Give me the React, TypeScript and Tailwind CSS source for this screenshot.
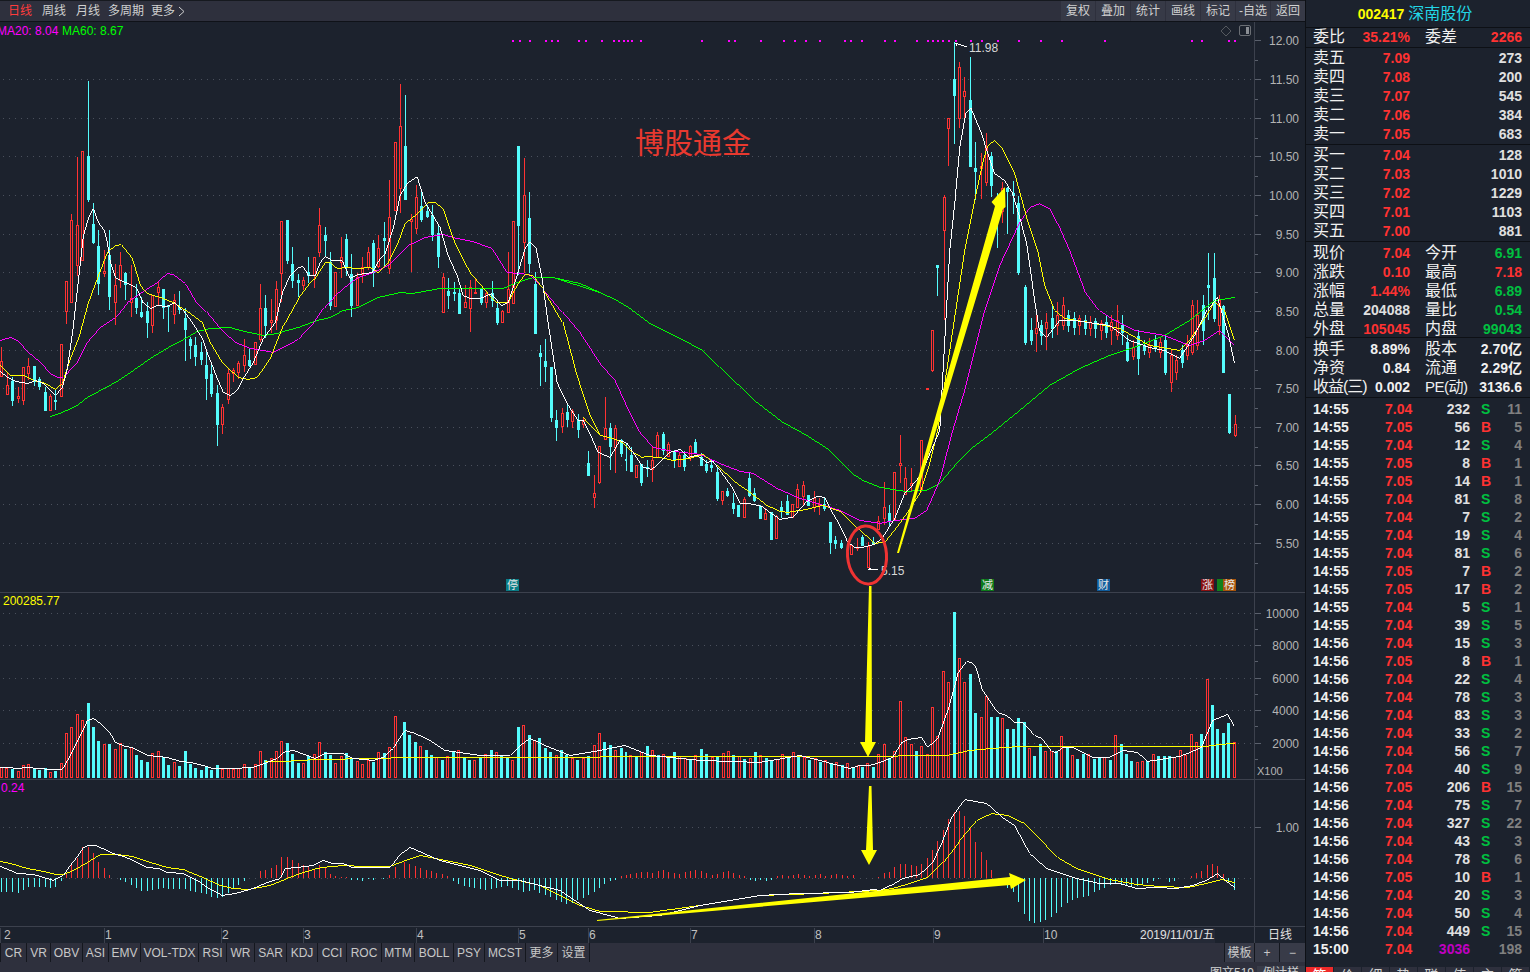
import React from "react";

// candle rows: [x, colour, high, bodyTop, bodyBottom, low], read off zoomed crops
type Row = [number, string, number, number, number, number];
type Pt = [number, number];

const seg = (ox: number, oy: number, rows: Row[], k = 3): Row[] =>
  rows.map(([x, c, h, t, b, l]) => [ox + x / k, c, oy + h / k, oy + t / k, oy + b / k, oy + l / k]);
const pts = (ox: number, oy: number, list: Pt[], k = 3): Pt[] => list.map(([x, y]) => [ox + x / k, oy + y / k]);
// half-pixel offset keeps the 1px lines on one pixel row
const toLine = (list: Pt[]) => list.map(([x, y]) => `${Math.round(x) + 0.5},${Math.round(y) + 0.5}`).join(" ");

const candles: Row[] = [
  ...seg(0, 75, [
    [3,"r",815,857,902,905],[22,"r",890,930,956,960],[37,"c",905,918,974,992],[55,"r",935,962,968,985],[70,"r",875,877,974,990],
    [85,"r",848,873,895,915],[103,"c",873,873,918,932],[118,"c",905,912,933,945],[136,"c",935,951,1005,1008],[151,"r",958,963,1006,1008],
    [166,"c",945,975,977,1005],[184,"r",808,808,964,966],[199,"r",619,619,707,746],[214,"r",418,436,680,682],[232,"r",247,451,569,603],
    [247,"r",229,229,556,558],[265,"c",18,243,372,381],[280,"c",385,447,501,507],[295,"c",465,513,623,660],[313,"r",525,589,594,607],
    [328,"c",465,540,662,705],[346,"r",568,630,680,750],[361,"r",532,571,615,640],[376,"c",590,594,627,675],[394,"r",570,670,680,725],
    [409,"c",628,668,695,717],[424,"c",665,711,723,728],[442,"c",680,708,740,790],[457,"r",660,660,749,773],[475,"r",618,637,651,690],
    [490,"c",642,642,697,732],[505,"c",690,691,693,770],[523,"r",657,675,716,746],[538,"c",648,695,702,718],[556,"c",700,730,762,857],
    [571,"c",785,792,809,852],[586,"c",785,809,842,873],[604,"c",800,831,851,870],[619,"c",828,870,908,974],[634,"c",870,897,954,965],
    [652,"c",930,954,1047,1112],[667,"r",988,997,1046,1076],[685,"r",880,895,973,988],[700,"r",878,885,893,920],[715,"r",858,865,892,912],
    [733,"r",793,841,869,890],[748,"c",820,855,870,875],[766,"r",800,801,868,870],[781,"r",628,700,791,800],[796,"c",660,700,749,790],
    [814,"r",672,736,740,775],[829,"r",618,643,736,765],[844,"r",439,439,593,680],[862,"c",436,436,555,566],[877,"c",517,568,614,638],
    [895,"c",598,616,620,667],
  ]),
  ...seg(300, 75, [
    [10,"r",605,615,629,645],[25,"c",547,592,600,625],[43,"r",547,547,600,640],[58,"r",400,451,530,545],[76,"c",455,481,494,545],
    [91,"c",530,561,690,705],[106,"r",590,592,692,694],[124,"r",485,545,560,608],[139,"c",478,492,575,603],[154,"c",538,598,690,725],
    [172,"r",595,605,689,691],[187,"r",547,575,596,623],[205,"r",515,532,575,585],[220,"c",495,505,590,635],[235,"r",480,520,572,580],
    [253,"c",442,490,494,575],[268,"r",315,427,578,596],[286,"r",202,202,406,408],[301,"r",28,154,338,413],[316,"c",60,213,371,373],
    [334,"r",418,432,438,590],[349,"r",330,367,458,478],[364,"c",345,392,431,440],[382,"c",390,408,423,430],[397,"c",390,420,477,497],
    [415,"c",450,475,543,578],[430,"r",595,607,712,714],[445,"c",610,648,660,702],[463,"c",622,652,654,678],[478,"c",640,653,713,718],
    [496,"r",630,682,697,700],[511,"r",615,635,700,770],[526,"r",610,650,652,655],[544,"c",640,642,680,690],[559,"r",650,655,680,700],
    [577,"c",618,655,675,695],[592,"c",675,700,740,750],[607,"r",705,709,742,745],[625,"r",530,642,710,712],[640,"r",437,439,683,685],
    [655,"c",213,213,449,600],[673,"r",250,361,502,595],[688,"c",352,430,563,595],[706,"c",592,627,773,775],[721,"c",810,835,843,932],
    [736,"c",793,858,873,920],[754,"c",875,877,1025,1040],[769,"c",1005,1035,1055,1097],[787,"r",1000,1015,1052,1073],[802,"c",985,1010,1032,1055],
    [817,"r",1003,1008,1037,1060],[835,"c",1018,1036,1063,1088],[850,"r",1025,1035,1048,1058],
  ]),
  ...seg(540, 260, [
    [145,"c",573,609,645,645],[163,"r",645,699,710,743],[178,"r",558,558,666,671],[196,"r",412,505,537,540],[211,"c",490,504,558,630],
    [226,"r",495,505,560,640],[244,"c",537,540,578,590],[259,"c",548,597,599,632],[277,"c",560,585,634,637],[292,"r",615,615,650,652],
    [307,"c",612,613,666,678],[325,"c",600,622,624,650],[340,"r",560,600,628,665],[355,"r",515,525,590,592],[373,"c",515,522,570,586],
    [388,"r",545,553,588,590],[406,"c",570,576,600,623],[421,"r",575,586,617,620],[436,"c",572,585,617,632],[454,"r",555,558,588,602],
    [469,"c",537,547,577,580],[487,"c",580,592,615,618],[502,"c",600,612,630,638],[517,"c",600,615,622,635],[535,"c",625,637,713,722],
    [550,"r",693,694,719,735],[565,"c",685,694,705,712],[583,"c",700,730,744,762],[598,"c",735,736,767,768],[616,"r",712,716,771,773],
    [631,"c",635,655,705,712],[646,"c",685,700,720,725],[664,"c",735,737,773,778],[679,"r",745,760,776,778],[697,"c",755,757,838,840],
    [712,"r",765,767,835,837],[727,"c",722,742,750,775],[745,"c",705,722,762,765],[760,"r",732,732,771,773],[775,"r",673,687,740,742],
    [793,"r",663,676,707,735],[808,"c",705,706,735,737],[826,"r",693,715,742,755],[841,"r",715,732,735,765],[856,"c",710,732,745,752],
    [874,"c",786,786,846,882],[889,"c",828,840,850,866],
  ]),
  ...seg(780, 430, [
    [187,"c",330,340,352,358],[217,"r",345,345,372,374],[235,"r",325,350,355,362],[250,"c",315,320,345,348],[266,"r",335,348,411,413],
    [283,"c",322,335,342,345],[298,"r",258,274,296,300],[316,"r",155,232,265,285],[331,"c",225,250,270,290],[346,"r",127,127,270,272],
    [364,"r",15,100,105,160],[379,"r",110,145,193,195],[397,"r",115,160,165,185],[427,"r",30,30,180,185],
  ]),
  ...seg(0, 0, [
    [928,"r",388,388,389,390],[933,"r",330,330,370,372],[938,"c",265,265,267,296],[945,"r",195,197,230,320],
  ], 1),
  ...seg(880, 30, [
    [208,"r",265,265,293,408],[226,"c",35,148,194,342],[241,"r",97,112,265,293],[256,"r",141,184,197,265],[274,"c",82,210,407,408],
    [289,"c",335,414,422,510],[307,"r",370,408,414,507],[322,"r",310,352,455,468],[337,"c",367,378,465,500],[355,"c",490,560,563,655],
    [370,"r",455,475,542,578],[385,"c",470,474,483,612],[403,"c",453,490,495,552],
  ]),
  ...seg(0, 0, [
    [1019,"c",196,203,272,275],[1026,"c",285,287,342,345],[1032,"c",318,330,340,345],[1037,"r",310,328,333,352],[1042,"c",320,325,335,345],
    [1047,"r",313,322,328,350],[1053,"c",305,318,328,338],[1058,"r",302,315,325,335],[1064,"r",297,305,325,330],[1069,"c",310,315,325,332],
    [1075,"c",312,318,327,335],[1080,"r",315,318,325,335],[1086,"c",315,320,328,335],[1091,"r",316,322,328,336],[1096,"c",318,321,328,338],
    [1102,"r",320,323,330,340],[1107,"c",316,322,332,338],[1112,"r",315,322,330,345],[1118,"r",305,320,335,340],[1123,"c",315,325,332,345],
    [1128,"c",335,342,360,362],[1134,"r",340,347,356,360],[1139,"c",330,336,358,375],[1145,"c",340,345,350,355],[1150,"r",338,345,352,358],
    [1156,"c",335,340,348,352],[1161,"r",338,342,352,358],[1166,"c",335,340,372,375],[1172,"r",350,355,382,392],[1177,"r",355,360,372,380],
    [1183,"c",345,350,362,368],[1188,"r",335,345,355,360],[1193,"r",300,305,352,355],[1198,"r",300,315,345,350],[1204,"c",295,305,330,345],
    [1209,"c",253,285,287,320],[1215,"c",253,278,318,322],[1220,"r",295,300,325,335],[1224,"c",305,306,372,373],[1230,"c",394,394,432,434],
    [1236,"r",415,424,435,437],
  ], 1),
];

const ma5: Pt[] = [
  ...pts(0, 75, [[0,888],[20,905],[40,915],[60,920],[85,925],[105,915],[130,925],[165,960],[185,935],[200,880],[215,770],[232,640],[250,480],[265,430],[280,400],[295,440],[312,465],[320,500],[330,560],[345,605],[360,615],[385,625],[410,640],[430,680],[450,700],[470,690],[500,692],[525,680],[550,705],[575,740],[605,790],[625,840],[650,910],[670,950],[690,960],[710,945],[730,910],[760,860],[790,790],[825,740],[845,650],[870,600],[895,575]]),
  ...pts(300, 75, [[10,572],[25,600],[45,600],[60,560],[76,543],[95,555],[125,555],[150,610],[175,597],[215,590],[240,550],[255,535],[280,460],[300,360],[320,325],[350,304],[375,380],[420,455],[445,540],[470,600],[490,660],[510,670],[540,668],[575,655],[605,690],[625,680],[650,600],[675,520],[690,497],[708,520],[725,610],[745,740],[770,920],[800,985],[835,1035],[850,1035],[875,1090]]),
  ...pts(540, 260, [[175,575],[210,592],[240,540],[260,550],[280,575],[310,622],[335,628],[365,600],[390,575],[420,568],[445,590],[470,585],[500,605],[520,603],[540,630],[580,685],[600,728],[625,730],[665,738],[690,755],[720,778],[760,770],[800,722],[830,708],[855,712],[880,760],[900,795]]),
  ...pts(780, 430, [[205,335],[225,350],[250,352],[285,342],[310,320],[345,265],[375,190],[410,150],[430,120],[480,0]]),
  ...pts(880, 30, [[210,660],[225,520],[240,350],[258,250],[274,232],[305,310],[320,360],[345,430],[375,450],[400,490],[420,560],[440,640]]),
  [1035,300],[1040,330],[1047,337],[1060,320],[1075,320],[1110,325],[1130,340],[1150,347],[1165,350],[1180,358],[1195,335],[1207,310],[1218,296],[1228,330],[1235,363],
];
const ma10: Pt[] = [
  ...pts(0, 75, [[0,870],[30,900],[70,900],[100,915],[130,920],[165,942],[185,925],[210,850],[235,790],[260,690],[290,610],[320,530],[345,510],[362,508],[395,550],[420,630],[440,655],[480,665],[520,680],[570,715],[605,740],[630,800],[665,860],[715,907],[745,913],[770,905],[810,850],[850,750],[895,668]]),
  ...pts(300, 75, [[30,620],[45,610],[75,560],[90,560],[110,578],[140,577],[175,580],[210,575],[235,592],[265,560],[295,500],[315,445],[345,420],[385,380],[405,380],[430,400],[460,490],[480,535],[510,590],[560,650],[590,680],[625,680],[650,630],[675,597],[700,600],[730,640],[790,740],[830,900],[870,1020],[900,1080]]),
  ...pts(540, 260, [[130,470],[180,525],[220,535],[245,545],[270,570],[305,592],[325,587],[375,593],[400,600],[450,595],[490,583],[530,615],[590,670],[630,695],[680,735],[720,752],[745,757],[800,747],[850,735],[900,752]]),
  ...pts(780, 430, [[230,290],[285,340],[315,335],[350,290],[385,245],[420,190],[450,100],[475,0]]),
  ...pts(880, 30, [[255,660],[290,480],[310,395],[325,345],[345,330],[365,350],[405,430],[440,560],[475,660]]),
  [1045,285],[1055,310],[1065,318],[1090,322],[1120,328],[1150,345],[1180,350],[1190,340],[1205,318],[1215,300],[1225,310],[1235,340],
];
const ma20: Pt[] = [
  ...pts(0, 75, [[0,795],[30,787],[50,795],[85,830],[120,860],[150,895],[170,907],[190,905],[230,860],[260,800],[300,755],[345,725],[380,680],[420,655],[470,620],[500,595],[520,597],[555,625],[585,675],[620,710],[660,760],[705,800],[750,820],[790,825],[820,832],[860,810],[895,792]]),
  ...pts(300, 75, [[40,745],[70,700],[100,665],[140,630],[175,605],[220,590],[265,570],[300,535],[325,510],[375,485],[430,477],[470,490],[520,497],[575,520],[620,590],[690,597],[730,640],[790,710],[840,770],[900,865]]),
  ...pts(540, 260, [[225,360],[270,460],[300,515],[340,560],[400,572],[480,583],[540,610],[600,632],[640,640],[710,685],[780,715],[830,730],[900,750]]),
  ...pts(780, 430, [[240,270],[300,280],[350,270],[405,265],[440,240],[480,150],[520,0]]),
  [965,390],[985,310],[1000,265],[1007,250],[1020,222],[1030,207],[1040,203],[1050,208],[1060,227],[1070,250],[1085,290],[1100,310],[1115,320],[1135,330],[1165,335],[1190,345],[1205,340],[1220,330],[1235,345],
];
const ma60: Pt[] = [
  ...pts(0, 75, [[150,1022],[185,1010],[230,990],[260,965],[345,922],[400,885],[450,850],[510,812],[560,785],[590,768],[630,760],[690,757],[720,765],[790,780],[830,775],[860,765],[895,757]]),
  ...pts(300, 75, [[50,735],[90,725],[130,705],[175,697],[235,665],[300,652],[335,655],[420,640],[610,640],[650,620],[700,605],[760,605],[840,625],[900,650]]),
  ...pts(540, 260, [[40,50],[120,68],[180,95],[230,120],[270,145],[330,188],[420,235],[490,270],[540,320],[590,370],[650,425],[730,485],[800,525],[870,570]]),
  ...pts(780, 430, [[190,100],[215,130],[250,150],[300,170],[375,182],[440,180],[480,160],[530,100],[580,50],[640,5]]),
  [1020,410],[1050,385],[1080,368],[1110,355],[1140,345],[1165,335],[1190,320],[1215,300],[1235,297],
];

// volume bars: [x, colour, top]
type Bar = [number, string, number];
const barsLeft: Bar[] = ([
  [3,"r",546],[19,"r",548],[35,"c",552],[53,"r",558],[70,"r",541],[85,"r",538],[103,"c",548],[118,"c",555],[136,"c",550],[151,"r",561],[166,"c",557],[184,"r",535],[199,"r",445],[214,"r",427],[232,"r",388],[247,"r",406],[265,"c",354],[280,"c",426],[295,"c",468],[313,"r",478],[328,"c",477],[346,"r",492],[361,"r",473],[376,"c",492],[394,"r",486],[409,"c",510],[424,"c",525],[442,"c",531],[457,"r",505],[475,"r",499],[490,"c",515],[505,"c",540],[523,"r",532],[538,"c",543],[556,"c",498],[571,"c",537],[586,"c",549],[604,"c",555],[619,"c",545],[634,"c",555],[652,"c",540],[667,"r",552],[685,"r",548],[700,"r",552],[715,"r",548],[733,"r",538],[748,"c",547],[766,"r",538],[781,"r",498],[796,"c",525],[814,"r",520],[829,"r",498],[844,"r",468],[862,"c",475],[877,"c",507],[895,"c",534],[910,"r",535],[925,"c",514],[943,"r",508],[958,"r",472],[976,"c",502],[991,"c",510],[1006,"r",534],[1024,"r",514],[1039,"c",504],[1054,"c",518],[1072,"r",528],[1087,"r",538],[1105,"r",525],[1120,"c",530],[1135,"r",502],[1153,"c",505],[1168,"r",487],[1186,"r",394],
] as Bar[]).map(([x, c, t]) => [x / 3, c, 585 + t / 3]);

// middle stretch: read from the full view only, spaced like the candles. r = up day, c = down day
const midVol = "c722 c735 c742 r746 c750 c755 r757 c760 r756 c752 r750 c757 c760 r760 c757 r754 c750 r752 c756 c758 r760 c727 r725 c735 r740 c738 c748 c752 r755 c750 c755 r758 c760 r758 c756 r745 r733 c742 c745 r750 c748 c752 r755 c756 r752 c746 r750 c755 r754 c757 c752 r756 r758 c759 r755 c749 c754 r757 c757 r753 r751 c755 r756 c759 r758 c752 r755 c758 c760 r759 r754 c757 r752 c756 r757 c760 r758 c762 r760 c764 r762 c765 r763 c767 r765";
const barsMid: Bar[] = midVol.split(" ").map((s, i) => [404 + i * 5.416, s[0], Number(s.slice(1))]);

const barsRight: Bar[] = ([
  [10,"c",530],[25,"r",520],[43,"c",530],[58,"r",492],[76,"r",463],[91,"c",505],[106,"r",484],[124,"r",334],[139,"r",441],[157,"r",463],[172,"c",483],[187,"r",469],[205,"r",492],[220,"r",352],[235,"r",438],[253,"r",244],[268,"r",277],[286,"c",66],[301,"r",205],[316,"r",277],[334,"c",252],[349,"c",369],[367,"r",382],[382,"r",318],[397,"c",381],[415,"c",381],[430,"r",385],[445,"c",417],[463,"c",417],[478,"c",384],[496,"c",396],[511,"r",475],[526,"c",498],[544,"c",462],[559,"r",484],[577,"r",484],[592,"c",484],[607,"r",439],[625,"c",470],[640,"r",496],[655,"c",507],[673,"c",491],[688,"r",493],[706,"c",507],[721,"c",503],[736,"r",502],[754,"c",510],[769,"r",436],[787,"c",462],[802,"c",492],[817,"c",513],[835,"r",517],[850,"r",514],[865,"c",512],[883,"r",493],[898,"c",498],[916,"c",498],[931,"c",498],[946,"r",500],[964,"r",481],[979,"r",495],[997,"r",433],[1012,"r",457],[1027,"c",432],[1045,"r",268],[1060,"c",345],[1075,"c",417],[1093,"c",429],[1108,"c",399],[1126,"r",457],
] as Bar[]).map(([x, c, t]) => [860 + x / 3, c, 590 + t / 3]);

const volBars = [...barsLeft, ...barsMid, ...barsRight];

const volWhite: Pt[] = [
  ...pts(0, 585, [[0,545],[20,547],[50,550],[80,547],[110,548],[150,552],[185,552],[210,510],[240,450],[260,405],[280,400],[300,415],[330,445],[345,470],[375,483],[395,485],[440,510],[500,517],[540,527],[570,532],[610,540],[635,550],[700,550],[760,545],[800,530],[830,520],[850,500],[880,495],[920,510],[945,520],[975,505],[1030,505],[1060,520],[1120,525],[1150,515],[1180,490],[1200,455]]),
  [405,730],[415,733],[430,740],[445,750],[480,755],[510,755],[520,745],[530,738],[545,745],[570,755],[600,750],[625,745],[650,755],[700,760],[760,762],[800,755],[820,760],[850,768],
  ...pts(860, 590, [[0,525],[30,525],[60,515],[100,500],[125,455],[145,448],[185,440],[205,472],[235,445],[265,360],[295,250],[320,213],[335,215],[350,235],[370,300],[415,367],[440,375],[465,397],[490,397],[525,435],[545,445],[575,483],[590,485],[610,470],[640,472],[700,500],[750,500],[790,480],[835,485],[865,512],[920,505],[960,498],[985,490],[1025,470],[1060,390],[1105,373],[1125,407]]),
];
const volYellow: Pt[] = [
  [265,761],[283,761],[317,759],[383,758],[400,757],[860,756],
  ...pts(860, 590, [[260,494],[330,480],[400,475],[480,468],[840,468],[1040,467],[1080,462],[1125,460]]),
];

// MACD histogram: [x, y end of the bar], zero line at y=878
const macdLeft: Pt[] = pts(0, 585, [[3,920],[19,922],[35,922],[53,924],[70,915],[85,905],[103,906],[118,906],[136,907],[151,908],[166,905],[184,888],[199,865],[214,835],[232,818],[247,787],[265,786],[280,805],[295,832],[313,850],[328,870],[361,884],[376,890],[394,900],[409,910],[424,917],[442,918],[457,915],[475,913],[490,910],[505,912],[520,912],[538,912],[556,912],[571,917],[586,922],[604,925],[619,928],[634,935],[652,940],[667,937],[685,925],[700,912],[715,900],[733,888],[766,878],[781,857],[796,855],[814,850],[829,840],[844,817],[862,816],[877,825],[895,833],[910,840],[925,847],[943,851],[958,840],[976,845],[991,867],[1006,873],[1024,875],[1039,877],[1054,884],[1071,886],[1087,887],[1105,882],[1120,884],[1150,881],[1168,870],[1186,845]]);
const macdMidY = [862,864,866,868,870,871,873,874,876,881,884,886,887,888,889,890,889,888,887,886,888,890,892,891,890,893,895,897,900,902,904,903,900,898,895,892,888,884,881,880,876,875,874,873,872,872,873,871,870,872,873,874,872,871,870,871,873,875,874,872,871,873,875,876,880,881,880,881,880,876,875,876,875,874,875,876,875,874,876,875,874,875,876,875];
const macdMid: Pt[] = macdMidY.map((y, i) => [404 + i * 5.416, y]);
const macdRight: Pt[] = pts(860, 590, [[58,860],[76,850],[91,846],[106,832],[124,822],[139,822],[157,826],[172,827],[187,822],[205,803],[220,780],[235,753],[253,720],[268,688],[286,665],[301,663],[316,678],[334,715],[349,755],[367,786],[382,810],[397,840],[445,893],[463,905],[478,935],[496,972],[511,992],[526,1000],[544,997],[559,990],[577,980],[592,968],[607,950],[625,940],[640,930],[655,925],[673,920],[688,917],[706,905],[721,900],[736,895],[754,885],[769,880],[787,883],[802,885],[817,888],[835,887],[850,885],[865,878],[883,872],[898,868],[931,875],[946,874],[997,858],[1012,850],[1027,843],[1045,825],[1060,823],[1075,828],[1093,852],[1108,880],[1126,900]]);
const macdBars = [...macdLeft, ...macdMid, ...macdRight];

const macdWhite: Pt[] = [
  ...pts(0, 585, [[0,843],[30,855],[50,865],[100,868],[130,875],[160,885],[190,870],[215,830],[245,790],[265,780],[285,780],[320,795],[340,805],[370,813],[400,825],[440,847],[475,850],[500,860],[550,865],[590,885],[620,905],[665,930],[705,925],[760,910],[800,890],[840,880],[855,850],[890,845],[940,840],[970,826],[995,835],[1030,835],[1055,846],[1170,845],[1200,808]]),
  [410,847],[440,860],[480,870],[500,880],[520,880],[560,890],[590,910],[620,918],[660,915],[700,905],[760,895],[800,893],[850,892],[875,889],
  ...pts(860, 590, [[60,900],[100,882],[130,865],[180,852],[215,820],[250,750],[275,680],[315,628],[380,640],[430,680],[465,705],[510,790],[560,835],[650,865],[720,878],[780,880],[830,893],[890,890],[950,895],[1000,885],[1040,870],[1075,850],[1100,872],[1125,890]]),
];
const macdYellow: Pt[] = [
  ...pts(0, 585, [[0,827],[30,835],[80,850],[130,857],[165,868],[190,868],[220,855],[260,830],[300,808],[350,808],[395,812],[450,830],[500,845],[550,852],[600,872],[660,900],[700,910],[745,912],[810,900],[860,880],[900,865],[950,850],[990,842],[1040,840],[1080,842],[1170,843],[1200,830]]),
  [420,855],[470,865],[510,878],[540,885],[580,905],[600,911],[650,912],[700,905],[760,895],[820,893],[880,890],
  ...pts(860, 590, [[100,895],[150,880],[205,862],[250,815],[300,750],[350,690],[395,670],[445,675],[495,700],[595,800],[650,835],[750,868],[830,882],[900,887],[985,890],[1040,878],[1085,868],[1125,875]]),
];

const dots = [512,519,529,545,551,557,578,585,601,613,618,623,628,632,641,702,729,735,761,784,795,806,820,845,851,862,885,895,917,928,933,938,943,949,956,971,982,998,1019,1041,1062,1105,1192,1202,1229,1235];
const priceTicks: [number, string][] = [[40,"12.00"],[79,"11.50"],[118,"11.00"],[156,"10.50"],[195,"10.00"],[234,"9.50"],[272,"9.00"],[311,"8.50"],[350,"8.00"],[388,"7.50"],[427,"7.00"],[465,"6.50"],[504,"6.00"],[543,"5.50"]];
const volTicks: [number, string][] = [[613,"10000"],[645,"8000"],[678,"6000"],[710,"4000"],[743,"2000"]];
const macdTicks: [number, string][] = [[827,"1.00"]];

const RED = "#ff3232";
const CYAN = "#54fcfc";

function Candle({ row }: { row: Row }) {
  const [rx, c, rh, rt, rb, rl] = row;
  const x = Math.round(rx);
  const h = Math.round(rh), t = Math.round(rt), b = Math.max(Math.round(rb), t + 1), l = Math.round(rl);
  const color = c === "r" ? RED : CYAN;
  return (
    <g>
      <line x1={x + 0.5} x2={x + 0.5} y1={h} y2={l} stroke={color} />
      {c === "r" ? (
        <rect x={x - 0.5} y={t + 0.5} width={2} height={b - t} fill="#1c222d" stroke={color} />
      ) : (
        <rect x={x - 1} y={t} width={3} height={b - t + 1} fill={color} />
      )}
    </g>
  );
}

function Line({ data, color }: { data: Pt[]; color: string }) {
  return <polyline points={toLine(data)} fill="none" stroke={color} strokeWidth={1} shapeRendering="crispEdges" />;
}

function Grid({ ys }: { ys: number[] }) {
  return (
    <g>
      {ys.map((y) => (
        <line key={y} x1={3} x2={1255} y1={y + 0.5} y2={y + 0.5} stroke="#4a505c" strokeDasharray="1 5" />
      ))}
    </g>
  );
}

function Axis({ y0, h, ticks, extra }: { y0: number; h: number; ticks: [number, string][]; extra?: React.ReactNode }) {
  const step = ticks.length > 1 ? (ticks[1][0] - ticks[0][0]) / 2 : 0;
  return (
    <svg width={50} height={h} viewBox={`0 ${y0} 50 ${h}`} className="block" shapeRendering="crispEdges">
      {ticks.map(([y, label]) => (
        <g key={label}>
          <line x1={0} x2={6} y1={y + 0.5} y2={y + 0.5} stroke="#5a606c" />
          {step > 0 && <line x1={0} x2={3} y1={y + step + 0.5} y2={y + step + 0.5} stroke="#5a606c" />}
          <text x={44} y={y + 5} textAnchor="end" fontSize={12} fill="#b4b4b4" shapeRendering="auto">
            {label}
          </text>
        </g>
      ))}
      {extra}
    </svg>
  );
}

function Tag({ label, bg, x }: { label: string; bg: string; x: string }) {
  return (
    <span className={`absolute top-[557px] flex h-[12px] w-[13px] items-center justify-center text-[11px] leading-none text-[#e8e8e8] ${x} ${bg}`}>
      {label}
    </span>
  );
}

function TopBar() {
  const left = ["周线", "月线", "多周期", "更多"];
  const right = ["复权", "叠加", "统计", "画线", "标记", "-自选", "返回"];
  return (
    <div className="flex h-[22px] items-center justify-between border-t border-b border-t-[#16191f] border-b-[#0f1218] bg-[#2e303d] text-[12px] text-[#d0d0d0]">
      <div className="flex items-center pl-[8px]">
        <span className="mr-[10px] text-[#ff3c3c]">日线</span>
        <span className="mr-[10px]">{left[0]}</span>
        <span className="mr-[8px]">{left[1]}</span>
        <span className="mr-[7px]">{left[2]}</span>
        <span className="mr-[3px]">{left[3]}</span>
        <svg width="7" height="11" viewBox="0 0 7 11" fill="none" stroke="#d0d0d0"><path d="M1 1l5 4.5L1 10" /></svg>
      </div>
      <div className="flex h-full gap-[1px]">
        {right.map((b) => (
          <span key={b} className="flex h-full w-[34px] items-center justify-center bg-[#373a47]">{b}</span>
        ))}
      </div>
    </div>
  );
}

function ChartStack() {
  return (
    <div className="relative">
      {/* price panel */}
      <div className="relative flex h-[571px] border-b border-[#3c414d]">
        <svg width={1255} height={570} viewBox="0 22 1255 570" className="block" shapeRendering="crispEdges">
          <Grid ys={[79, 118, 156, 195, 234, 272, 311, 350, 388, 427, 465, 504, 543]} />
          {dots.map((x) => (
            <rect key={x} x={x} y={40} width={2} height={2} fill="#ff00ff" />
          ))}
          {candles.map((r, i) => (
            <Candle key={i} row={r} />
          ))}
          <Line data={ma60} color="#00ff00" />
          <Line data={ma20} color="#ff00ff" />
          <Line data={ma10} color="#ffff00" />
          <Line data={ma5} color="#ffffff" />
          <path d="M956 43h3M957 43v3M959 44l9 3M870 570h9M869 570l3-2" stroke="#ffffff" fill="none" />
        </svg>
        <div className="border-l border-[#3c414d]">
          <Axis y0={22} h={570} ticks={priceTicks} />
        </div>
        <span className="absolute left-[-3px] top-[0px] text-[12px] text-[#ff00ff]">MA20: 8.04</span>
        <span className="absolute left-[62px] top-[0px] text-[12px] text-[#00ff00]">MA60: 8.67</span>
        <span className="absolute left-[635px] top-[103px] text-[29px] leading-[38px] text-[#e8392f]">博股通金</span>
        <span className="absolute left-[969px] top-[17px] text-[12px] text-[#d8d8d8]">11.98</span>
        <span className="absolute left-[881px] top-[540px] text-[12px] text-[#d8d8d8]">5.15</span>
        <Tag label="停" bg="bg-[#0a7d86]" x="left-[506px]" />
        <Tag label="减" bg="bg-[#0d7a1a]" x="left-[981px]" />
        <Tag label="财" bg="bg-[#0f5c9c]" x="left-[1097px]" />
        <Tag label="涨" bg="bg-[#8a1010]" x="left-[1201px]" />
        <span className="absolute left-[1217px] top-[557px] h-[12px] w-[7px] bg-[#12801c]" />
        <Tag label="榜" bg="bg-[#a8550c]" x="left-[1223px]" />
        <svg width="34" height="16" viewBox="0 0 34 16" className="absolute left-[1220px] top-[2px]" fill="none">
          <path d="M6 2l5 5-5 5-5-5z" stroke="#55595f" />
          <rect x="19.5" y="1.5" width="11" height="10" rx="1.5" stroke="#6a6e74" />
          <rect x="26" y="3" width="3" height="7" fill="#8a8e94" />
        </svg>
      </div>

      {/* volume panel */}
      <div className="relative flex h-[187px] border-b border-[#3c414d]">
        <svg width={1255} height={186} viewBox="0 593 1255 186" className="block" shapeRendering="crispEdges">
          <Grid ys={volTicks.map((t) => t[0])} />
          {volBars.map(([x, c, t], i) => {
            const rx = Math.round(x);
            const ry = Math.round(t);
            return c === "r" ? (
              <rect key={i} x={rx - 0.5} y={ry + 0.5} width={2} height={777 - ry} fill="#1c222d" stroke={RED} />
            ) : (
              <rect key={i} x={rx - 1} y={ry} width={3} height={778 - ry} fill={CYAN} />
            );
          })}
          <Line data={volYellow} color="#ffff00" />
          <Line data={volWhite} color="#ffffff" />
        </svg>
        <div className="border-l border-[#3c414d]">
          <Axis
            y0={593}
            h={186}
            ticks={volTicks}
            extra={
              <text x={2} y={775} fontSize={11} fill="#b4b4b4" shapeRendering="auto">X100</text>
            }
          />
        </div>
        <span className="absolute left-[3px] top-[-1px] text-[12px] text-[#ffff00]">200285.77</span>
      </div>

      {/* macd panel */}
      <div className="relative flex h-[147px] border-b border-[#3c414d]">
        <svg width={1255} height={146} viewBox="0 780 1255 146" className="block" shapeRendering="crispEdges">
          <Grid ys={[827, 878]} />
          {macdBars.map(([x, y], i) => {
            const rx = Math.round(x) + 0.5;
            return <line key={i} x1={rx} x2={rx} y1={878} y2={Math.round(y)} stroke={y < 878 ? RED : CYAN} />;
          })}
          <Line data={macdYellow} color="#ffff00" />
          <Line data={macdWhite} color="#ffffff" />
        </svg>
        <div className="border-l border-[#3c414d]">
          <Axis y0={780} h={146} ticks={macdTicks} />
        </div>
        <span className="absolute left-[1px] top-[-1px] text-[12px] text-[#ff00ff]">0.24</span>
      </div>

      {/* hand-drawn marks on top of the panels */}
      <svg width={1255} height={927} viewBox="0 22 1255 927" className="pointer-events-none absolute left-0 top-0">
        <ellipse cx={867} cy={555} rx={19.5} ry={29} fill="none" stroke="#ee3333" strokeWidth={3} transform="rotate(-4 867 555)" />
        <g fill="#ffff00">
          <polygon points="897,553 995,206 991.5,202 1005,187 1005.5,207 1003,209 899,553" />
          <polygon points="869,586 865,742 860,742 868,757 876,742 872,742 871.5,586" />
          <polygon points="869,786 866,850 861,850 869,865 877,850 873,850 871.5,786" />
          <polygon points="597,920 1010,877 1009,873 1026,880 1011,889 1010,885 597,921" />
        </g>
      </svg>
    </div>
  );
}

function XAxis() {
  const labels = [["2", "w-[104px] pl-[3px]"], ["1", "w-[117px]"], ["2", "w-[82px]"], ["3", "w-[113px]"], ["4", "w-[102px]"], ["5", "w-[70px]"], ["6", "w-[102px]"], ["7", "w-[124px]"], ["8", "w-[119px]"], ["9", "w-[110px]"], ["10", "w-[97px]"]];
  return (
    <div className="flex h-[16px] items-center text-[12px] text-[#c0c0c0]">
      <div className="flex w-[1255px]">
        {labels.map(([t, w], i) => (
          <span key={i} className={`border-l border-[#3c414d] leading-[15px] ${w}`}>{t}</span>
        ))}
        <span className="bg-[#242936] leading-[15px] text-[#e0e0e0]">2019/11/01/五</span>
      </div>
      <span className="flex h-full w-[51px] items-center justify-center border-l border-[#3c414d] text-[#e0e0e0]">日线</span>
    </div>
  );
}

function IndicatorTabs() {
  const tabs = [["CR","w-[25px]"],["VR","w-[23px]"],["OBV","w-[31px]"],["ASI","w-[25px]"],["EMV","w-[31px]"],["VOL-TDX","w-[57px]"],["RSI","w-[27px]"],["WR","w-[27px]"],["SAR","w-[31px]"],["KDJ","w-[30px]"],["CCI","w-[28px]"],["ROC","w-[34px]"],["MTM","w-[32px]"],["BOLL","w-[38px]"],["PSY","w-[30px]"],["MCST","w-[40px]"],["更多","w-[31px]"],["设置","w-[31px]"]];
  return (
    <div className="flex h-[19px] gap-[1px] bg-[#14171e] pl-[1px] text-[12px] text-[#c8c8c8]">
      {tabs.map(([t, w]) => (
        <span key={t} className={`flex items-center justify-center bg-[#2e303d] ${w}`}>{t}</span>
      ))}
      <span className="flex-1 bg-[#2e303d]" />
      <span className="flex w-[29px] items-center justify-center bg-[#383b48]">模板</span>
      <span className="flex w-[24px] items-center justify-center bg-[#383b48]">+</span>
      <span className="flex w-[25px] items-center justify-center bg-[#383b48]">−</span>
    </div>
  );
}

function Quote({ l1, v1, c1, l2, v2, c2 }: { l1: React.ReactNode; v1: string; c1: string; l2: React.ReactNode; v2: string; c2: string }) {
  return (
    <div className="flex h-[19px] items-center pl-[7px] pr-[8px]">
      <div className="flex w-[97px] items-center justify-between">
        <span className="text-[16px] leading-none text-[#f0f0f0]">{l1}</span>
        <span className={`text-[14px] font-bold leading-none ${c1}`}>{v1}</span>
      </div>
      <div className="ml-[15px] flex flex-1 items-center justify-between">
        <span className="text-[16px] leading-none text-[#f0f0f0]">{l2}</span>
        <span className={`text-[14px] font-bold leading-none ${c2}`}>{v2}</span>
      </div>
    </div>
  );
}

function Level({ label, price, vol }: { label: string; price: string; vol: string }) {
  return (
    <div className="flex h-[19px] items-center pl-[7px] pr-[8px]">
      <span className="w-[50px] text-[16px] leading-none text-[#f0f0f0]">{label}</span>
      <span className="w-[47px] text-right text-[14px] font-bold leading-none text-[#ff3232]">{price}</span>
      <span className="flex-1 text-right text-[14px] font-bold leading-none text-[#e0e0e0]">{vol}</span>
    </div>
  );
}

const sells = [["卖五","7.09","273"],["卖四","7.08","200"],["卖三","7.07","545"],["卖二","7.06","384"],["卖一","7.05","683"]];
const buys = [["买一","7.04","128"],["买二","7.03","1010"],["买三","7.02","1229"],["买四","7.01","1103"],["买五","7.00","881"]];

const ticks: [string, string, string, string, string][] = [
  ["14:55","7.04","232","S","11"],["14:55","7.05","56","B","5"],["14:55","7.04","12","S","4"],["14:55","7.05","8","B","1"],
  ["14:55","7.05","14","B","1"],["14:55","7.04","81","S","8"],["14:55","7.04","7","S","2"],["14:55","7.04","19","S","4"],
  ["14:55","7.04","81","S","6"],["14:55","7.05","7","B","2"],["14:55","7.05","17","B","2"],["14:55","7.04","5","S","1"],
  ["14:55","7.04","39","S","5"],["14:56","7.04","15","S","3"],["14:56","7.05","8","B","1"],["14:56","7.04","22","S","4"],
  ["14:56","7.04","78","S","3"],["14:56","7.04","83","S","3"],["14:56","7.04","33","S","2"],["14:56","7.04","56","S","7"],
  ["14:56","7.04","40","S","9"],["14:56","7.05","206","B","15"],["14:56","7.04","75","S","7"],["14:56","7.04","327","S","22"],
  ["14:56","7.04","43","S","3"],["14:56","7.04","78","S","6"],["14:56","7.05","10","B","1"],["14:56","7.04","20","S","3"],
  ["14:56","7.04","50","S","4"],["14:56","7.04","449","S","15"],["15:00","7.04","3036","","198"],
];

function QuotePanel() {
  return (
    <div className="flex h-full w-[224px] flex-col bg-[#1c222d]">
      <div className="flex h-[28px] items-center justify-center gap-[4px] border-b border-[#0d1015] pr-[6px] pt-[2px]">
        <span className="text-[14px] font-bold text-[#ffff00]">002417</span>
        <span className="text-[16px] text-[#22d6e6]">深南股份</span>
      </div>
      <div className="h-[20px] border-b border-[#0d1015]">
        <Quote l1="委比" v1="35.21%" c1="text-[#ff3232]" l2="委差" v2="2266" c2="text-[#ff3232]" />
      </div>
      <div className="h-[97px] border-b border-[#0d1015] pt-[1px]">
        {sells.map(([a, b, c]) => <Level key={a} label={a} price={b} vol={c} />)}
      </div>
      <div className="h-[97px] border-b border-[#0d1015] pt-[1px]">
        {buys.map(([a, b, c]) => <Level key={a} label={a} price={b} vol={c} />)}
      </div>
      <div className="h-[96px] border-b border-[#0d1015] pt-[2px]">
        <Quote l1="现价" v1="7.04" c1="text-[#ff3232]" l2="今开" v2="6.91" c2="text-[#00c040]" />
        <Quote l1="涨跌" v1="0.10" c1="text-[#ff3232]" l2="最高" v2="7.18" c2="text-[#ff3232]" />
        <Quote l1="涨幅" v1="1.44%" c1="text-[#ff3232]" l2="最低" v2="6.89" c2="text-[#00c040]" />
        <Quote l1="总量" v1="204088" c1="text-[#e0e0e0]" l2="量比" v2="0.54" c2="text-[#00c040]" />
        <Quote l1="外盘" v1="105045" c1="text-[#ff3232]" l2="内盘" v2="99043" c2="text-[#00c040]" />
      </div>
      <div className="h-[61px] border-b border-[#0d1015] pt-[2px]">
        <Quote l1="换手" v1="8.89%" c1="text-[#f0f0f0]" l2="股本" v2="2.70亿" c2="text-[#f0f0f0]" />
        <Quote l1="净资" v1="0.84" c1="text-[#f0f0f0]" l2="流通" v2="2.29亿" c2="text-[#f0f0f0]" />
        <Quote
          l1={<span className="tracking-[-1px]">收益(三)</span>}
          v1="0.002"
          c1="text-[#f0f0f0]"
          l2={<span className="text-[15px] tracking-[-0.5px]">PE(动)</span>}
          v2="3136.6"
          c2="text-[#f0f0f0]"
        />
      </div>
      <div className="h-[567px] overflow-hidden pt-[2px]">
        {ticks.map(([time, price, vol, flag, count], i) => (
          <div key={i} className="flex h-[18px] items-center pl-[7px] pr-[8px] text-[14px] font-bold leading-none">
            <span className="w-[72px] text-[#f0f0f0]">{time}</span>
            <span className="w-[28px] text-[#ff3232]">{price}</span>
            <span className={`w-[57px] text-right ${flag ? "text-[#e0e0e0]" : "text-[#c000c0]"}`}>{vol}</span>
            <span className={`ml-[11px] w-[10px] ${flag === "S" ? "text-[#00c040]" : "text-[#ff3232]"}`}>{flag}</span>
            <span className="flex-1 text-right text-[#808080]">{count}</span>
          </div>
        ))}
      </div>
      <div className="mt-[8px] flex h-[5px] gap-[1px] overflow-hidden text-[14px] leading-[16px] text-[#d0d0d0]">
        {["笔", "价", "细", "势", "联", "值", "主", "筹"].map((t, i) => (
          <span key={t} className={`flex w-[27px] justify-center ${i === 0 ? "bg-[#ee2a2a] text-white" : "bg-[#2e303d]"}`}>{t}</span>
        ))}
      </div>
    </div>
  );
}

export default function App() {
  return (
    <div className="flex h-[972px] w-[1530px] overflow-hidden bg-[#1c222d] [font-family:'Liberation_Sans','Noto_Sans_CJK_SC',sans-serif]">
      <div className="flex w-[1306px] flex-col border-r border-[#0d1015]">
        <TopBar />
        <ChartStack />
        <XAxis />
        <IndicatorTabs />
        <div className="flex h-[11px] flex-1 justify-end gap-[1px] overflow-hidden bg-[#2e303d] pt-[4px] text-[12px] leading-[14px] text-[#d0d0d0]">
          <span className="w-[48px] bg-[#2e303d] text-center">图文519</span>
          <span className="w-[48px] bg-[#383b48] text-center">例计样</span>
        </div>
      </div>
      <QuotePanel />
    </div>
  );
}
